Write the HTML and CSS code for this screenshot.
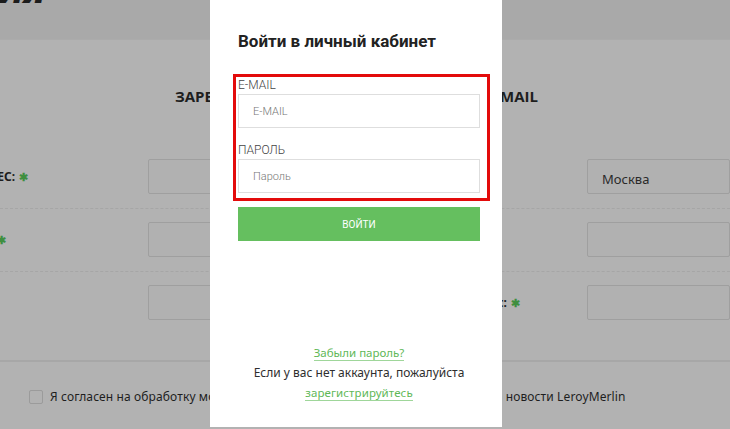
FILE: index.html
```html
<!DOCTYPE html>
<html lang="ru">
<head>
<meta charset="utf-8">
<title>Вход</title>
<link rel="stylesheet" href="styles.css">
</head>
<body>
<div class="page">
  <div class="band">
    <div class="page-title"><span>РЕГИСТРАЦИЯ</span></div>
  </div>
  <div class="heads">
    <div class="head-left">ЗАРЕГИСТРИРОВАТЬСЯ</div>
    <div class="head-right">ВХОД ПО E-MAIL</div>
  </div>
  <div class="rows">
    <div class="row">
      <div class="lbl lbl-left">АДРЕС: <span class="star">&#10033;</span></div>
      <div class="fld"></div>
      <div class="lbl lbl-right"></div>
      <div class="fld">Москва</div>
    </div>
    <div class="row">
      <div class="lbl lbl-left lbl-far">ТЕЛЕФОН: <span class="star">&#10033;</span></div>
      <div class="fld"></div>
      <div class="lbl lbl-right"></div>
      <div class="fld"></div>
    </div>
    <div class="row row-last">
      <div class="lbl lbl-left"></div>
      <div class="fld"></div>
      <div class="lbl lbl-right">Адрес: <span class="star">&#10033;</span></div>
      <div class="fld"></div>
    </div>
  </div>
  <div class="agree">
    <span class="box"></span>
    <span class="agree-text">Я согласен на обработку моих персональных данных и хочу подписаться на новости LeroyMerlin</span>
  </div>
</div>

<div class="modal">
  <h2 class="m-title">Войти в личный кабинет</h2>
  <div class="mark">
    <label class="m-label">E-MAIL</label>
    <div class="m-input">E-MAIL</div>
    <label class="m-label m-label2">ПАРОЛЬ</label>
    <div class="m-input">Пароль</div>
  </div>
  <div class="m-btn">ВОЙТИ</div>
  <div class="m-foot">
    <div><span class="link">Забыли пароль?</span></div>
    <div class="m-text">Если у вас нет аккаунта, пожалуйста</div>
    <div><span class="link link2">зарегистрируйтесь</span></div>
  </div>
</div>
</body>
</html>
```

FILE: styles.css
```css
* { box-sizing: border-box; }
html, body { margin: 0; padding: 0; }
body {
  width: 730px;
  height: 429px;
  overflow: hidden;
  background: #b2b2b2;
  font-family: "Noto Sans", "Open Sans", sans-serif;
  position: relative;
}
.page { width: 730px; }
.band {
  height: 40px;
  background: #a9a9a9;
  border-bottom: 1px solid #ababab;
  overflow: hidden;
}
.page-title {
  width: 46px;
  display: flex;
  justify-content: flex-end;
  margin-top: -27px;
}
.page-title span {
  font-family: "Open Sans", sans-serif;
  font-weight: 800;
  font-style: italic;
  font-size: 34px;
  line-height: 34px;
  color: #1c1c1c;
  white-space: nowrap;
}
.heads {
  height: 106px;
  padding-top: 47px;
  display: flex;
}
.head-left, .head-right {
  font-family: "Open Sans", sans-serif;
  font-weight: 700;
  font-size: 15px;
  line-height: 18px;
  color: #1e1e1e;
  white-space: nowrap;
}
.head-left { margin-left: 175px; }
.head-right { margin-left: auto; margin-right: 192px; }
.row {
  display: grid;
  grid-template-columns: 148px 217px 222px 143px;
  align-items: center;
  padding: 13px 0 14px;
  border-bottom: 1px dashed #a6a6a6;
}
.row-last {
  border-bottom: 2px solid #a7a7a7;
  padding-bottom: 40px;
}
.lbl {
  font-weight: 700;
  font-size: 12px;
  color: #1c1c1c;
  white-space: nowrap;
  display: flex;
  justify-content: flex-end;
  align-items: center;
  gap: 4px;
}
.lbl-left { padding-right: 120px; }
.lbl-far { padding-right: 142px; }
.lbl-right { padding-right: 67px; }
.star { color: #3f8f3f; font-size: 11px; }
.fld {
  height: 35px;
  border: 1px solid #9f9f9f;
  border-radius: 2px;
  background: #b1b1b1;
  font-size: 13px;
  color: #2a2a2a;
  padding: 4px 0 0 14px;
  display: flex;
  align-items: center;
}
.agree {
  display: flex;
  align-items: center;
  padding: 26px 0 0 29px;
}
.box {
  width: 14px;
  height: 14px;
  border: 1px solid #9b9b9b;
  border-radius: 2px;
  flex: none;
}
.agree-text {
  margin-left: 7px;
  font-size: 12px;
  letter-spacing: 0.12px;
  color: #1e1e1e;
  white-space: nowrap;
}

.modal {
  position: absolute;
  left: 210px;
  top: 0;
  width: 292px;
  height: 427px;
  background: #fff;
  padding: 31px 22px 24px 28px;
  display: flex;
  flex-direction: column;
  font-family: Roboto, "Liberation Sans", sans-serif;
}
.m-title {
  margin: 0;
  font-size: 17px;
  line-height: 20px;
  font-weight: 700;
  color: #222;
}
.mark {
  margin: 23px -10px 0 -5px;
  border: 3px solid #e30b0b;
  padding: 0 7px 5px 2px;
}
.m-label {
  display: block;
  font-size: 12px;
  line-height: 17px;
  font-weight: 300;
  color: #444;
}
.m-label2 { margin-top: 14px; }
.m-input {
  height: 34px;
  border: 1px solid #dedede;
  background: #fff;
  font-size: 11px;
  font-weight: 300;
  color: #777;
  padding-left: 14px;
  display: flex;
  align-items: center;
}
.m-btn {
  margin-top: 6px;
  height: 34px;
  background: #65bf5f;
  color: #fff;
  font-size: 10px;
  display: flex;
  align-items: center;
  justify-content: center;
}
.m-foot {
  margin-top: auto;
  text-align: center;
  font-family: "Noto Sans", "Open Sans", sans-serif;
  font-size: 12px;
  line-height: 20px;
}
.link {
  color: #5fb858;
  border-bottom: 1px solid #9fd69a;
}
.link:first-child { font-size: 11.5px; }
.link2 { letter-spacing: 0.1px; }
.m-text { color: #2e2e2e; }
```
